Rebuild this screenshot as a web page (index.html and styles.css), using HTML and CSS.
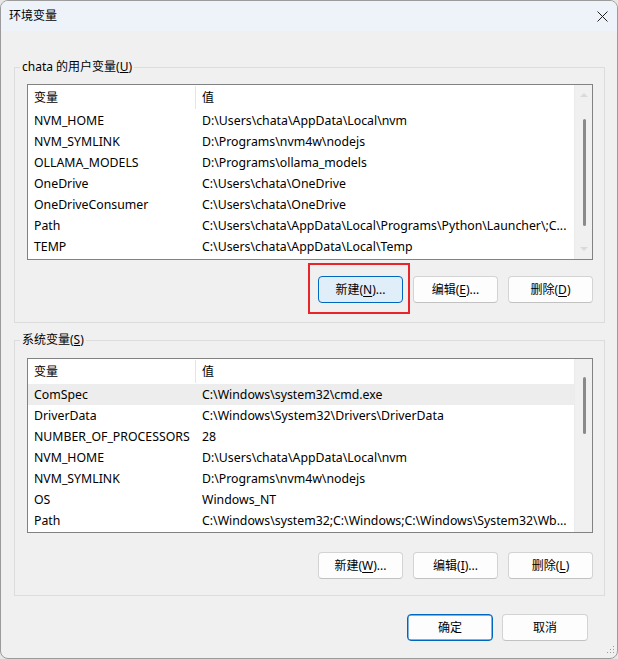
FILE: index.html
```html
<!DOCTYPE html>
<html lang="zh-CN">
<head>
<meta charset="utf-8">
<title>环境变量</title>
<link rel="stylesheet" href="styles.css">
</head>
<body>
<div class="window">
  <div class="titlebar">
    <span class="title">环境变量</span>
    <svg class="close" width="11" height="11" viewBox="0 0 11 11"><path d="M0.5 0.5 L10.5 10.5 M10.5 0.5 L0.5 10.5" stroke="#1f1f1f" stroke-width="1" fill="none"/></svg>
  </div>
  <div class="content">
    <div class="group group-user">
      <span class="legend">chata 的用户变量(<u>U</u>)</span>
      <div class="list list-user">
        <div class="list-main">
          <div class="head"><div class="c1">变量</div><div class="c2">值</div></div>
          <div class="row"><div class="c1">NVM_HOME</div><div class="c2">D:\Users\chata\AppData\Local\nvm</div></div>
          <div class="row"><div class="c1">NVM_SYMLINK</div><div class="c2">D:\Programs\nvm4w\nodejs</div></div>
          <div class="row"><div class="c1">OLLAMA_MODELS</div><div class="c2">D:\Programs\ollama_models</div></div>
          <div class="row"><div class="c1">OneDrive</div><div class="c2">C:\Users\chata\OneDrive</div></div>
          <div class="row"><div class="c1">OneDriveConsumer</div><div class="c2">C:\Users\chata\OneDrive</div></div>
          <div class="row"><div class="c1">Path</div><div class="c2">C:\Users\chata\AppData\Local\Programs\Python\Launcher\;C...</div></div>
          <div class="row"><div class="c1">TEMP</div><div class="c2">C:\Users\chata\AppData\Local\Temp</div></div>
        </div>
        <div class="scroll scroll-user">
          <span class="arrow-up"></span>
          <span class="thumb thumb-user"></span>
          <span class="arrow-down"></span>
        </div>
      </div>
      <div class="btns btns-user">
        <button class="btn btn-focus">新建(<u>N</u>)...</button>
        <button class="btn">编辑(<u>E</u>)...</button>
        <button class="btn">删除(<u>D</u>)</button>
      </div>
    </div>

    <div class="group group-sys">
      <span class="legend">系统变量(<u>S</u>)</span>
      <div class="list list-sys">
        <div class="list-main">
          <div class="head"><div class="c1">变量</div><div class="c2">值</div></div>
          <div class="row row-selected"><div class="c1">ComSpec</div><div class="c2">C:\Windows\system32\cmd.exe</div></div>
          <div class="row"><div class="c1">DriverData</div><div class="c2">C:\Windows\System32\Drivers\DriverData</div></div>
          <div class="row"><div class="c1">NUMBER_OF_PROCESSORS</div><div class="c2">28</div></div>
          <div class="row"><div class="c1">NVM_HOME</div><div class="c2">D:\Users\chata\AppData\Local\nvm</div></div>
          <div class="row"><div class="c1">NVM_SYMLINK</div><div class="c2">D:\Programs\nvm4w\nodejs</div></div>
          <div class="row"><div class="c1">OS</div><div class="c2">Windows_NT</div></div>
          <div class="row"><div class="c1">Path</div><div class="c2">C:\Windows\system32;C:\Windows;C:\Windows\System32\Wb...</div></div>
        </div>
        <div class="scroll scroll-sys">
          <span class="thumb thumb-sys"></span>
        </div>
      </div>
      <div class="btns btns-sys">
        <button class="btn">新建(<u>W</u>)...</button>
        <button class="btn">编辑(<u>I</u>)...</button>
        <button class="btn">删除(<u>L</u>)</button>
      </div>
    </div>

    <div class="dialog-btns">
      <button class="btn btn-wide btn-default">确定</button>
      <button class="btn btn-wide">取消</button>
    </div>
  </div>
  <div class="annotation"></div>
  <svg class="grip" width="10" height="10" viewBox="0 0 10 10">
    <rect x="8" y="0" width="1" height="1" fill="#9a9a9a"/>
    <rect x="5" y="3" width="1" height="1" fill="#9a9a9a"/>
    <rect x="8" y="3" width="1" height="1" fill="#9a9a9a"/>
    <rect x="2" y="6" width="1" height="1" fill="#9a9a9a"/>
    <rect x="5" y="6" width="1" height="1" fill="#9a9a9a"/>
    <rect x="8" y="6" width="1" height="1" fill="#9a9a9a"/>
  </svg>
</div>
</body>
</html>
```

FILE: styles.css
```css
html, body {
  margin: 0;
  padding: 0;
  background: #e6e6e6;
}

body {
  font-family: "Noto Sans", "Noto Sans CJK SC", sans-serif;
  font-size: 12px;
  color: #000;
}

.window {
  position: relative;
  width: 618px;
  height: 659px;
  box-sizing: border-box;
  border: 1px solid #9b9b9b;
  border-radius: 8px;
  background: #f0f0f0;
  overflow: hidden;
  display: flex;
  flex-direction: column;
}

.titlebar {
  height: 30px;
  flex: none;
  background: #eef2f9;
  display: flex;
  align-items: center;
  justify-content: space-between;
  padding: 0 9px 0 8px;
}

.title {
  font-size: 12px;
  line-height: 16px;
  color: #000;
}

.close {
  display: block;
}

.content {
  padding: 36px 12px 0 13px;
}

.group {
  position: relative;
  border: 1px solid #dcdcdc;
  padding: 16px 11px 19px 12px;
}

.group-sys {
  margin-top: 17px;
  padding-top: 17px;
  padding-bottom: 16px;
}

.legend {
  position: absolute;
  top: -9px;
  left: 5px;
  padding: 0 2px;
  line-height: 16px;
  background: #f0f0f0;
  white-space: nowrap;
}

.list {
  box-sizing: border-box;
  height: 176px;
  border: 1px solid #828282;
  background: #fff;
  display: flex;
}

.list-sys {
  height: 175px;
}

.list-main {
  flex: 1;
  min-width: 0;
  border-right: 1px solid #ececec;
}

.head {
  display: flex;
  height: 25px;
  line-height: 25px;
}

.head .c1 {
  width: 167px;
}

.head .c2 {
  border-left: 1px solid #e5e5e5;
  margin-top: 1px;
  line-height: 23px;
  height: 23px;
}

.c1 {
  flex: none;
  width: 168px;
  box-sizing: border-box;
  padding-left: 6px;
  white-space: nowrap;
  overflow: hidden;
}

.c2 {
  flex: 1;
  min-width: 0;
  padding-left: 6px;
  white-space: nowrap;
  overflow: hidden;
}

.row {
  display: flex;
  height: 21px;
  line-height: 21px;
  font-size: 12.3px;
}

.row-selected {
  background: #ededed;
}

.scroll {
  flex: none;
  width: 17px;
  background: #f0f0f0;
  display: flex;
  flex-direction: column;
  align-items: center;
}

.arrow-up,
.arrow-down {
  display: block;
  width: 0;
  height: 0;
  border-left: 4px solid transparent;
  border-right: 4px solid transparent;
}

.arrow-up {
  margin-top: 8px;
  border-bottom: 4px solid #dadada;
}

.arrow-down {
  margin-top: auto;
  margin-bottom: 8px;
  border-top: 4px solid #dadada;
}

.thumb {
  display: block;
  width: 3px;
  border-radius: 2px;
  background: #8a8a8a;
  margin-left: 1px;
}

.thumb-user {
  margin-top: 22px;
  height: 107px;
}

.thumb-sys {
  margin-top: 18px;
  height: 57px;
}

.btns {
  display: flex;
  justify-content: flex-end;
  gap: 10px;
  margin-top: 16px;
}

.btns-sys {
  margin-top: 19px;
}

.btn {
  width: 85px;
  height: 27px;
  box-sizing: border-box;
  margin: 0;
  padding: 0;
  font-family: "Noto Sans", "Noto Sans CJK SC", sans-serif;
  font-size: 12px;
  color: #000;
  background: #fdfdfd;
  border: 1px solid #d3d3d3;
  border-bottom-color: #c2c2c2;
  border-radius: 4px;
  line-height: 25px;
  text-align: center;
}

.btn u {
  text-decoration-thickness: 1px;
  text-underline-offset: 2px;
}

.btn-focus {
  background: #e0eef9;
  border: 1px solid #0067c0;
}

.dialog-btns {
  display: flex;
  justify-content: flex-end;
  gap: 9px;
  margin-top: 18px;
  padding-right: 17px;
}

.btn-wide {
  width: 86px;
}

.btn-default {
  background: #fdfdfd;
  border: 1px solid #0067c0;
  box-shadow: inset 0 0 0 0.5px #0067c0;
}

.annotation {
  position: absolute;
  left: 307px;
  top: 262px;
  width: 102px;
  height: 51px;
  box-sizing: border-box;
  border: 2px solid #e8262a;
  pointer-events: none;
}

.grip {
  position: absolute;
  right: 2px;
  bottom: 2px;
}
```
